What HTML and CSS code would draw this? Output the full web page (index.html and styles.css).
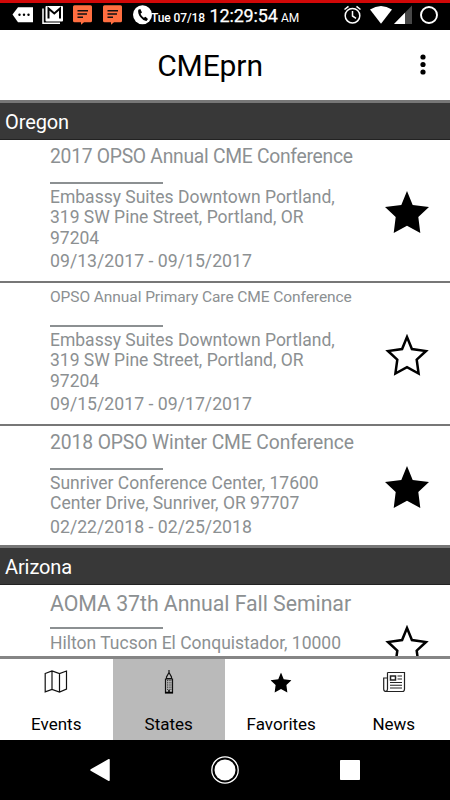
FILE: index.html
```html
<!DOCTYPE html>
<html lang="en">
<head>
<meta charset="utf-8">
<title>CMEprn</title>
<link rel="stylesheet" href="styles.css">
</head>
<body>
<svg class="defs" aria-hidden="true">
  <symbol id="star" viewBox="0 0 44 44"><path d="M22 0l5.700 14L44 16l-10.700 10 2 16L22 34.700 8.700 42l2-16L0 16l16.300-2z"/></symbol>
  <symbol id="star-outline" viewBox="0 0 44 44"><path d="M22 3l4.900 12L41 17l-9.300 8.700 1.900 13.800L22 33.200 10.400 39.500l1.900-13.800L3 17l14.100-2z" fill="none" stroke="#000" stroke-width="2.500"/></symbol>
</svg>
<div class="status">
  <svg class="notifications" viewBox="0 0 150 27">
    <path d="M12.500 11.500L18 4.200h15v15H18z" fill="#fff"/>
    <g fill="#000"><circle cx="19.500" cy="11.800" r="1.200"/><circle cx="24" cy="11.800" r="1.200"/><circle cx="28.500" cy="11.800" r="1.200"/></g>
    <path d="M43 5.500v14.700h17" fill="none" stroke="#fff" stroke-width="1.500"/>
    <rect x="45.500" y="3" width="17.500" height="15.500" rx="1" fill="#fff"/>
    <path d="M48.500 15.500V5.500l5.800 5 5.700-5v10" fill="none" stroke="#000" stroke-width="2"/>
    <g fill="#ff6e40"><path id="chat" d="M74.500 2.200h16q1.500 0 1.500 1.500v14q0 1.500-1.500 1.500H84l-3 2.500v-2.500h-6.500q-1.500 0-1.500-1.500v-14q0-1.500 1.500-1.500z"/><use href="#chat" x="30"/></g>
    <g stroke="#111" stroke-width="1.500"><path d="M77.500 7.700h10.500M77.500 11h9.500M77.500 14.200h5.500M107.500 7.700H118M107.500 11h9.500M107.500 14.200h5.500"/></g>
    <circle cx="142.500" cy="11.700" r="9.500" fill="#fff"/>
    <path d="M138.300 6.700l2-.7 1.700 3.500-1.500 1.200q1 2.600 3.300 4l1.700-1 2.500 2.300-1.500 2q-3 .2-6-3.700t-2.200-7.600z" fill="#000"/>
  </svg>
  <div class="clock"><span class="date">Tue 07/18</span><span class="time">12:29:54</span><span class="ampm">AM</span></div>
  <svg class="signals" viewBox="0 0 110 27">
    <g fill="none" stroke="#fff" stroke-width="1.500"><circle cx="12.500" cy="12.700" r="7.300"/><path d="M12.500 8v5l3.500 2.300M4.500 6.500l4-3.200M20.500 6.500l-4-3.200"/></g>
    <path d="M30 6.500q11-7 22 0L41 20.700z" fill="#fff"/>
    <path d="M72 2.500V21H54z" fill="#484848"/><path d="M65 9.700V21H54z" fill="#fff"/>
    <circle cx="89" cy="12" r="8" fill="none" stroke="#fff" stroke-width="1.900"/>
  </svg>
</div>
<header class="header">
  <h1>CMEprn</h1>
  <svg class="menu" viewBox="0 0 8 22"><circle cx="4" cy="3" r="2.600"/><circle cx="4" cy="10.500" r="2.600"/><circle cx="4" cy="18" r="2.600"/></svg>
</header>
<main class="list">
  <h2 class="state">Oregon</h2>
  <article class="event">
    <div class="info"><h3 class="t1">2017 OPSO Annual CME Conference</h3><div class="rule"></div>
      <p class="address">Embassy Suites Downtown Portland,<br>319 SW Pine Street, Portland, OR<br>97204</p><p class="dates">09/13/2017 - 09/15/2017</p></div>
    <svg class="star"><use href="#star"/></svg>
  </article>
  <article class="event">
    <div class="info"><h3 class="t2">OPSO Annual Primary Care CME Conference</h3><div class="rule"></div>
      <p class="address">Embassy Suites Downtown Portland,<br>319 SW Pine Street, Portland, OR<br>97204</p><p class="dates">09/15/2017 - 09/17/2017</p></div>
    <svg class="star"><use href="#star-outline"/></svg>
  </article>
  <article class="event short">
    <div class="info"><h3 class="t4">2018 OPSO Winter CME Conference</h3><div class="rule"></div>
      <p class="address">Sunriver Conference Center, 17600<br>Center Drive, Sunriver, OR 97707</p><p class="dates">02/22/2018 - 02/25/2018</p></div>
    <svg class="star"><use href="#star"/></svg>
  </article>
  <h2 class="state next">Arizona</h2>
  <article class="event short">
    <div class="info"><h3 class="t3">AOMA 37th Annual Fall Seminar</h3><div class="rule"></div>
      <p class="address last">Hilton Tucson El Conquistador, 10000<br>N. Oracle Rd</p></div>
    <svg class="star"><use href="#star-outline"/></svg>
  </article>
</main>
<nav class="tabs">
  <div class="tab"><svg viewBox="0 0 24 24"><path d="M1.200 3.500L8 1l7.500 2.500L22.500 1v18l-7 3L8 19.500l-6.800 2.300zM8 1v18.500M15.500 3.500V22" fill="none" stroke="#111" stroke-width="1.200"/></svg><span>Events</span></div>
  <div class="tab active"><svg viewBox="0 0 24 24"><path d="M12 0v4M12 2.500L9.500 7v1.500h5V7zM8.500 9h7v14h-7z" fill="none" stroke="#111" stroke-width="1.200"/><path d="M10.500 10v10M12.200 10v10M13.900 10v10" stroke="#222" stroke-width=".8" stroke-dasharray="1.200 1"/><path d="M8 22.500h8M12 20v3" stroke="#000" stroke-width="1.500"/></svg><span>States</span></div>
  <div class="tab"><svg viewBox="0 0 24 24"><use href="#star" x="1.500" y="2.500" width="21" height="21"/></svg><span>Favorites</span></div>
  <div class="tab"><svg viewBox="0 0 24 24"><g fill="none" stroke="#222"><path d="M5.500 2.500h17V19q0 2.500-2 2.500h-16q-2.800 0-2.800-2.300V8h3.800M5.500 2.500V19q0 2-1.500 2.300" stroke-width="1.200"/><path d="M8.500 6h5v4h-5z" stroke-width="1.500"/><path d="M15.500 6H20M15.500 9H20M8 12.500h12M8 15.300h12M8 18h12" stroke-width="1.100"/></g></svg><span>News</span></div>
</nav>
<footer class="softkeys">
  <svg viewBox="0 0 450 60"><path d="M91 30L109 19.700v20.600z" fill="#fff" stroke="#fff" stroke-width="1.500" stroke-linejoin="round"/><circle cx="225" cy="30" r="10.500" fill="#fff"/><circle cx="225" cy="30" r="13.200" fill="none" stroke="#fff" stroke-width="1.300"/><rect x="340" y="20" width="20" height="20" rx=".8" fill="#fff"/></svg>
</footer>
</body>
</html>
```
FILE: styles.css
```css
* { box-sizing: border-box; }
body { margin: 0; width: 450px; height: 800px; overflow: hidden; display: flex; flex-direction: column; background: #fff; color: #000; font-family: Roboto, sans-serif; }
h1, h2, h3, p { margin: 0; font-weight: 400; white-space: nowrap; }
svg { display: block; flex: none; }
.defs { width: 0; height: 0; position: absolute; }
.status { height: 30px; flex: none; background: #000; border-top: 3px solid #d10808; color: #fff; display: flex; }
.notifications { width: 150px; height: 27px; overflow: visible; }
.clock { width: 190px; padding-left: 1px; display: flex; align-items: baseline; line-height: 26px; white-space: nowrap; }
.date { font-size: 12px; font-weight: 500; width: 58.500px; letter-spacing: -.1px; }
.time { font-size: 18px; font-weight: 400; width: 71.500px; letter-spacing: -.15px; -webkit-text-stroke: .25px #fff; }
.ampm { font-size: 12px; font-weight: 400; }
.signals { width: 110px; height: 27px; }
.header { height: 70px; flex: none; display: grid; grid-template-columns: 50px 320px 30px 50px; align-items: center; }
.header h1 { grid-column: 2; padding-top: 2px; font-size: 30px; line-height: 40px; text-align: center; letter-spacing: -.1px; }
.menu { grid-column: 4; width: 8px; height: 22px; margin-left: 18.500px; }
.list { height: 556px; flex: none; overflow: hidden; }
.state { height: 39.500px; border-top: 3px solid #777; border-bottom: 1px solid #222; background: #383838; color: #fff; padding-left: 5px; font-size: 20px; line-height: 38px; letter-spacing: -.1px; }
.event { height: 143px; border-bottom: 2.500px solid #777; display: flex; align-items: center; padding-left: 50px; }
.short { height: 119.500px; border-bottom: 0; }
.info { align-self: flex-start; width: 335px; color: #8c9092; }
.info h3 { height: 42px; line-height: 34px; }
.info .t1 { font-size: 19.300px; line-height: 33px; letter-spacing: -.27px; }
.info .t2 { font-size: 15.500px; line-height: 28px; letter-spacing: -.07px; }
.info .t3 { font-size: 21.300px; line-height: 37px; letter-spacing: -.05px; }
.info .t4 { font-size: 19.300px; letter-spacing: -.1px; }
.rule { width: 112.500px; height: 2px; background: #8c9092; }
.address { padding-top: 3px; font-size: 17.500px; line-height: 20.600px; }
.last { line-height: 22px; }
.dates { font-size: 17.700px; line-height: 26px; }
.star { width: 44px; height: 44px; margin-top: 5px; }
.tabs { height: 84px; flex: none; border-top: 3px solid #858585; display: grid; grid-template-columns: repeat(4, 1fr); }
.tab { display: flex; flex-direction: column; align-items: center; padding-top: 11px; font-size: 17px; line-height: 24px; }
.tab svg { width: 24px; height: 24px; }
.tab span { margin-top: 18px; }
.active { background: #bababa; }
.softkeys { height: 60px; flex: none; background: #000; }
.softkeys svg { width: 450px; height: 60px; }
```
